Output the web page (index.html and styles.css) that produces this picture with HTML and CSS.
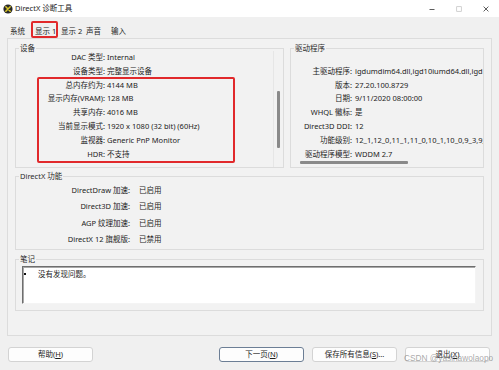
FILE: index.html
```html
<!DOCTYPE html>
<html lang="zh-CN">
<head>
<meta charset="utf-8">
<title>DirectX 诊断工具</title>
<link rel="stylesheet" href="styles.css">
</head>
<body>
<header class="titlebar">
  <svg class="app-icon" viewBox="0 0 10 10" aria-hidden="true">
    <circle cx="5" cy="5" r="4.6" fill="#2a2a2a"/>
    <path d="M2.8 2.8 L7.2 7.2 M7.2 2.8 L2.8 7.2" stroke="#d9c828" stroke-width="1.5" stroke-linecap="round"/>
  </svg>
  <span class="title">DirectX 诊断工具</span>
  <div class="controls">
    <span class="ctl"><svg viewBox="0 0 10 10"><path d="M2.5 5.5 H7.5" stroke="#333" stroke-width="0.8"/></svg></span>
    <span class="ctl"><svg viewBox="0 0 10 10"><rect x="2.7" y="2.7" width="4.6" height="4.6" fill="none" stroke="#bdbdbd" stroke-width="0.7"/></svg></span>
    <span class="ctl"><svg viewBox="0 0 10 10"><path d="M2.6 2.6 L7.4 7.4 M7.4 2.6 L2.6 7.4" stroke="#333" stroke-width="0.8"/></svg></span>
  </div>
</header>

<nav class="tabs">
  <span class="tab">系统</span>
  <span class="tab active">显示 1</span>
  <span class="tab">显示 2</span>
  <span class="tab">声音</span>
  <span class="tab">输入</span>
</nav>

<main class="panel">
  <div class="top-row">
    <fieldset class="group device">
      <legend>设备</legend>
      <div class="scrollview">
        <div class="props device-props">
          <span class="k">DAC 类型:</span><span class="v">Internal</span>
          <span class="k">设备类型:</span><span class="v">完整显示设备</span>
          <span class="k">总内存约为:</span><span class="v">4144 MB</span>
          <span class="k">显示内存(VRAM):</span><span class="v">128 MB</span>
          <span class="k">共享内存:</span><span class="v">4016 MB</span>
          <span class="k">当前显示模式:</span><span class="v">1920 x 1080 (32 bit) (60Hz)</span>
          <span class="k">监视器:</span><span class="v">Generic PnP Monitor</span>
          <span class="k">HDR:</span><span class="v">不支持</span>
        </div>
        <div class="vscroll"><div class="vthumb"></div></div>
      </div>
    </fieldset>

    <fieldset class="group driver">
      <legend>驱动程序</legend>
      <div class="clipview">
        <div class="props driver-props">
          <span class="k">主驱动程序:</span><span class="v">igdumdim64.dll,igd10iumd64.dll,igd10iumd64.dll</span>
          <span class="k">版本:</span><span class="v">27.20.100.8729</span>
          <span class="k">日期:</span><span class="v">9/11/2020 08:00:00</span>
          <span class="k">WHQL 徽标:</span><span class="v">是</span>
          <span class="k">Direct3D DDI:</span><span class="v">12</span>
          <span class="k">功能级别:</span><span class="v">12_1,12_0,11_1,11_0,10_1,10_0,9_3,9_2,9_1</span>
          <span class="k">驱动程序模型:</span><span class="v">WDDM 2.7</span>
        </div>
      </div>
      <div class="hscroll"><div class="hthumb"></div></div>
    </fieldset>
  </div>

  <fieldset class="group features">
    <legend>DirectX 功能</legend>
    <div class="props feature-props">
      <span class="k">DirectDraw 加速:</span><span class="v">已启用</span>
      <span class="k">Direct3D 加速:</span><span class="v">已启用</span>
      <span class="k">AGP 纹理加速:</span><span class="v">已启用</span>
      <span class="k">DirectX 12 旗舰版:</span><span class="v">已禁用</span>
    </div>
  </fieldset>

  <fieldset class="group notes">
    <legend>笔记</legend>
    <div class="notebox">
      <div class="note"><span class="bullet"></span>没有发现问题。</div>
    </div>
  </fieldset>
</main>

<footer class="buttons">
  <button class="btn">帮助(<u>H</u>)</button>
  <button class="btn primary push">下一页(<u>N</u>)</button>
  <button class="btn">保存所有信息(<u>S</u>)...</button>
  <button class="btn">退出(<u>X</u>)</button>
</footer>

<div class="mark mark-tab"></div>
<div class="mark mark-rows"></div>
<div class="watermark">CSDN @yasinawolaopo</div>
</body>
</html>
```

FILE: styles.css
```css
* { box-sizing: border-box; }

html, body { margin: 0; padding: 0; }

body {
  width: 499px;
  height: 370px;
  overflow: hidden;
  position: relative;
  background: #f0f0f0;
  color: #1c1c1c;
  font-family: "Noto Sans", "Noto Sans CJK SC", sans-serif;
  font-size: 7.5px;
}

/* title bar */
.titlebar {
  height: 17px;
  background: #ffffff;
  display: flex;
  align-items: center;
  padding-left: 3px;
}
.app-icon { width: 10px; height: 10px; display: block; }
.title { margin-left: 2px; line-height: 17px; color: #222; }
.controls { margin-left: auto; display: flex; }
.ctl { width: 27px; height: 17px; display: flex; align-items: center; justify-content: center; }
.ctl svg { width: 10px; height: 10px; display: block; }

/* tabs */
.tabs {
  height: 21px;
  display: flex;
  padding: 7px 0 0 10px;
  line-height: 14px;
}
.tab { width: 25px; white-space: nowrap; }
.tab.active { width: 26px; }

/* tab panel */
.panel {
  margin: 0 7px;
  height: 298px;
  border: 1px solid #dcdcdc;
  background: #f2f2f2;
  padding: 5px 7px 0 7px;
}
.top-row { display: flex; gap: 6px; }

.group {
  margin: 0;
  padding: 0;
  min-width: 0;
  border: 1px solid #dcdcdc;
}
.group legend {
  margin-left: 3px;
  padding: 0 1px;
  line-height: 8px;
  color: #2a2a2a;
}
.device { width: 269px; }
.driver { width: 194px; }

.props {
  display: grid;
  white-space: nowrap;
}
.props .k { text-align: right; }
.props .v { overflow: visible; }

/* 设备 */
.scrollview {
  margin-top: -1px;
  height: 116px;
  display: flex;
}
.device-props {
  flex: 1;
  grid-template-columns: 89px minmax(0, 1fr);
  column-gap: 2px;
  grid-auto-rows: 13.8px;
  line-height: 13.8px;
  overflow: hidden;
}
.vscroll {
  width: 10px;
  border-left: 1px solid #e6e6e6;
}
.vthumb {
  width: 3px;
  height: 57px;
  margin: 40px 0 0 3px;
  background: #8a8a8a;
  border-radius: 1px;
}

/* 驱动程序 */
.clipview {
  margin-top: -1px;
  height: 107px;
  overflow: hidden;
  padding-top: 13.8px;
}
.driver-props {
  grid-template-columns: 61px minmax(0, 1fr);
  column-gap: 3px;
  grid-auto-rows: 13.8px;
  line-height: 13.8px;
}
.hscroll { height: 9px; padding: 3px 0 0 9px; }
.hthumb { width: 108px; height: 3px; background: #8a8a8a; border-radius: 1px; }

/* DirectX 功能 */
.features { margin-top: 4px; }
.feature-props {
  height: 69px;
  padding-top: 2px;
  grid-template-columns: 114px minmax(0, 1fr);
  column-gap: 9px;
  grid-auto-rows: 16.3px;
  line-height: 16.3px;
}

/* 笔记 */
.notes { margin-top: 5px; }
.notebox {
  margin: 3px 7px 6px 6px;
  height: 38px;
  background: #ffffff;
  border-style: solid;
  border-width: 1px;
  border-color: #6e6e6e #f4f4f4 #f4f4f4 #6e6e6e;
  box-shadow: inset 1px 1px 0 #a8a8a8;
}
.note {
  line-height: 14px;
  padding: 0 0 0 1px;
  display: flex;
  align-items: center;
}
.bullet {
  width: 2px;
  height: 2px;
  background: #111;
  margin-right: 12px;
}

/* bottom buttons */
.buttons {
  margin-top: 11px;
  display: flex;
  gap: 8px;
  padding: 0 9px 0 8px;
}
.btn {
  width: 85px;
  height: 15px;
  padding: 0;
  background: #fdfdfd;
  border: 1px solid #d3d3d3;
  border-radius: 3px;
  font-family: "Noto Sans", "Noto Sans CJK SC", sans-serif;
  font-size: 7.5px;
  line-height: 13px;
  color: #1c1c1c;
  text-align: center;
}
.btn.primary { border-color: #6c7e95; }
.btn.push { margin-left: auto; }

/* annotations laid over the screenshot */
.mark {
  position: absolute;
  border: 2px solid #e1292b;
  border-radius: 2px;
}
.mark-tab { left: 31px; top: 21px; width: 27px; height: 17px; }
.mark-rows { left: 37px; top: 77px; width: 198px; height: 86px; }

.watermark {
  position: absolute;
  left: 404px;
  top: 353px;
  font-family: "Liberation Sans", sans-serif;
  font-size: 8.3px;
  line-height: 10px;
  color: rgba(110, 110, 110, 0.6);
  white-space: nowrap;
}
```
